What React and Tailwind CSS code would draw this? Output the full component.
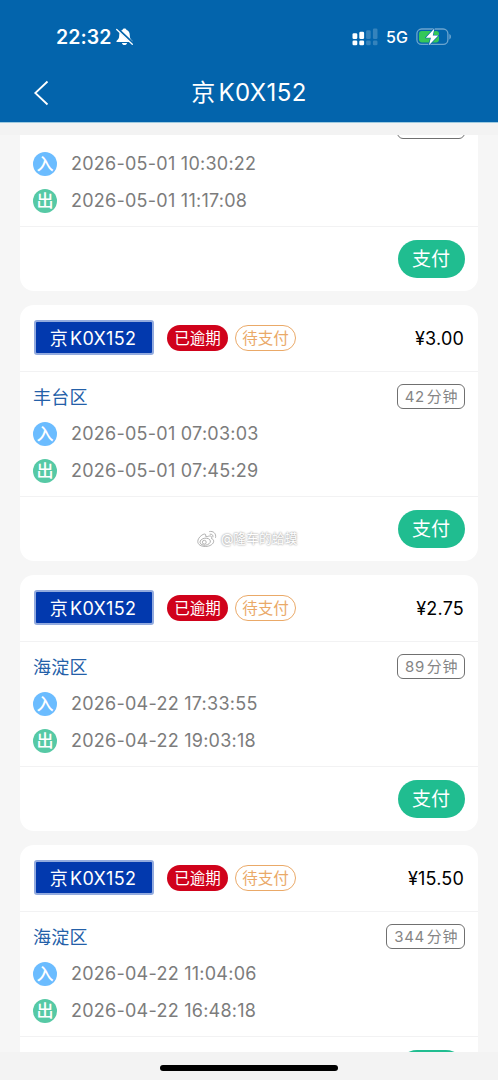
const records = [
  { id: 1, entry: "2026-05-01 10:30:22", exit: "2026-05-01 11:17:08", payable: true },
  { id: 2, region: "京", plate: "K0X152", amount: "¥3.00", area: "丰台区", minutes: "42", entry: "2026-05-01 07:03:03", exit: "2026-05-01 07:45:29", payable: true },
  { id: 3, region: "京", plate: "K0X152", amount: "¥2.75", area: "海淀区", minutes: "89", entry: "2026-04-22 17:33:55", exit: "2026-04-22 19:03:18", payable: true },
  { id: 4, region: "京", plate: "K0X152", amount: "¥15.50", area: "海淀区", minutes: "344", entry: "2026-04-22 11:04:06", exit: "2026-04-22 16:48:18", payable: false },
];

function StatusBar() {
  return (
    <div className="flex h-[74px] items-end justify-between pr-[46px] pb-[25px] pl-[56px] text-white">
      <div className="flex h-6 items-center gap-[3px]">
        <span className="text-[19.5px] leading-6 font-semibold tracking-[0.1px]">22:32</span>
        <svg className="h-[18px] w-[19px]" viewBox="0 0 19 18">
          <path d="M9.500.600c-1.200 0-1.900.6-2.100 1.500C5.200 3 4.200 4.700 4.200 7.200c0 3-.8 3.900-2.300 5.200-.9.800-.4 1.700.6 1.700h14c1 0 1.500-.9.600-1.700-1.500-1.300-2.300-2.200-2.300-5.200 0-2.500-1-4.200-3.200-5.100C11.400 1.200 10.700.6 9.500.6zM6.900 15h5.200c-.2 1.300-1.300 2.100-2.600 2.100S7.100 16.300 6.900 15z" fill="#fff" />
          <path d="M2.600 1 18 15.400" stroke="#0364ac" strokeWidth="2.6" />
          <path d="M1.700 1.500 17.300 16.200" stroke="#fff" strokeWidth="1.3" strokeLinecap="round" />
        </svg>
      </div>
      <div className="flex h-6 items-center">
        <svg className="h-[18px] w-[26px]" viewBox="0 0 26 18" fill="#fff">
          <rect x="0.5" y="5.2" width="4.8" height="5.8" rx="1.3" />
          <rect x="7.3" y="3.8" width="4.8" height="7.2" rx="1.3" />
          <rect x="14.1" y="2.2" width="4.6" height="8.8" rx="1.3" opacity=".2" />
          <rect x="20.9" y="0.5" width="4.6" height="10.5" rx="1.3" opacity=".2" />
          <rect x="0.5" y="12.4" width="4.8" height="4.8" rx="1.3" />
          <rect x="7.3" y="12.4" width="4.8" height="4.8" rx="1.3" />
          <rect x="14.1" y="12.4" width="4.6" height="4.8" rx="1.3" opacity=".2" />
          <rect x="20.9" y="12.4" width="4.6" height="4.8" rx="1.3" opacity=".2" />
        </svg>
        <span className="ml-[8px] w-[22px] text-[16px] leading-6 font-medium">5G</span>
        <svg className="ml-[8px] h-[18px] w-[36px]" viewBox="0 0 36 18">
          <rect x=".9" y="1" width="31" height="15.4" rx="4.7" fill="none" stroke="#fff" strokeOpacity=".42" strokeWidth="1.3" />
          <path d="M33.400 6c2 .8 2 4.600 0 5.400z" fill="#fff" opacity=".45" />
          <rect x="3" y="3" width="20" height="11.400" rx="2.8" fill="#34c759" />
          <path d="M18.400.4 9.800 9.700h5.100l-2 7.500 9.400-9.600h-5.500z" fill="#fff" stroke="#0364ac" strokeWidth="1.2" paintOrder="stroke" strokeLinejoin="round" />
        </svg>
      </div>
    </div>
  );
}

function TimeRow({ mark, color, time }) {
  return (
    <div className="flex h-[37px] items-center">
      <span className={`flex h-6 w-6 items-center justify-center rounded-full text-[17px] leading-6 font-medium text-white ${color}`}>{mark}</span>
      <span className="ml-[14px] text-[18px] tracking-[0.25px] whitespace-nowrap text-[#7c7c7c]">{time}</span>
    </div>
  );
}

function RecordCard({ record }) {
  return (
    <article className="h-[256px] shrink-0 overflow-hidden rounded-[14px] bg-white">
      <div className="flex h-[67px] items-center border-b-[1.5px] border-[#f2f2f3] px-[14px]">
        {record.plate && (
          <>
            <span className="-mt-px flex h-[35px] w-[120px] items-center justify-center gap-[2px] rounded-[3px] border-2 border-[#92aade] bg-[#0239ae] pt-[2px] pr-[2px] text-[18px] tracking-[0.3px] text-white">
              <span>{record.region}</span>
              <span>{record.plate}</span>
            </span>
            <span className="ml-[13px] flex h-[26px] w-[61px] items-center justify-center rounded-full bg-[#d0021b] pt-[2px] text-[15.5px] leading-5 text-white">已逾期</span>
            <span className="ml-[7px] flex h-[26px] w-[61px] items-center justify-center rounded-full border-[1.5px] border-[#eaa968] pt-[2px] text-[15.5px] leading-5 text-[#eaa968]">待支付</span>
            <span className="ml-auto text-[18px] tracking-[0.2px] text-black">{record.amount}</span>
          </>
        )}
      </div>
      <div className="h-[125px] border-b-[1.5px] border-[#f2f2f3] px-[13px] pt-[6px]">
        <div className="flex h-[37px] items-center justify-between">
          <span className="pt-[2px] text-[18px] tracking-[0.2px] text-[#2460a8]">{record.area}</span>
          <span className="flex h-[25px] min-w-[68px] items-center rounded-[6px] border-[1.4px] border-[#707070] pt-px pr-[6px] pl-[7px] text-[15px] tracking-[0.6px] text-[#858585]">
            {record.minutes && (
              <>
                <span className="mr-[2px]">{record.minutes}</span>分钟
              </>
            )}
          </span>
        </div>
        <TimeRow mark="入" color="bg-[#6bbcff]" time={record.entry} />
        <TimeRow mark="出" color="bg-[#56c9a5]" time={record.exit} />
      </div>
      <div className="flex h-[64px] items-start justify-end pt-[13px] pr-[13px]">
        <button className="h-[38px] w-[67px] rounded-full bg-[#20bd90] pt-[2px] pr-px text-[19px] leading-[36px] text-white">{record.payable && "支付"}</button>
      </div>
    </article>
  );
}

function Watermark() {
  return (
    <div className="absolute top-[529px] left-[197px] flex h-[20px] items-center gap-[4px]">
      <svg className="h-[19px] w-[20px]" viewBox="0 0 20 19" fill="none" stroke="#a0a0a0" strokeWidth=".8">
        <path d="M8.500 6.300c1-2.400-.8-3-3.600-1.200C2.200 7 .8 9.500.8 11.500c0 3.300 3.500 5 7.600 5 4.700 0 8.300-2.700 8.300-5.300 0-1.600-1.200-2.300-2.200-2.600.8-2.300-.8-3.400-4.200-2z" />
        <ellipse cx="8.2" cy="11.7" rx="5.2" ry="3.5" transform="rotate(-8 8.2 11.7)" />
        <circle cx="7.3" cy="12.2" r="1.9" />
        <path d="M12.200 1.600c4-1 7.300 2 6.300 6.200M12.700 4.200c2.200-.4 3.700 1 3.200 3" />
      </svg>
      <span className="text-[12.8px] leading-5 whitespace-nowrap text-white [text-shadow:0_0_2px_#a0a0a0,0_0_2px_#bbb]">@隆车的蛤蟆</span>
    </div>
  );
}

export default function App() {
  return (
    <main className="relative flex h-[1080px] w-[498px] flex-col overflow-hidden bg-[#f6f6f6] font-['Inter','Noto_Sans_CJK_SC',sans-serif]">
      <header className="h-[123px] shrink-0 border-b border-[#9fcbe0] bg-[#0364ac]">
        <StatusBar />
        <div className="grid h-[38px] grid-cols-[96px_1fr_96px] items-center">
          <svg className="ml-[33px] h-[26px] w-[16px]" viewBox="0 0 16 26" fill="none" stroke="#fff" strokeWidth="1.8">
            <path d="M14.500 1.500 2.300 13l12.200 11.500" />
          </svg>
          <h1 className="flex items-center justify-center gap-[3px] text-[24px] leading-[38px] tracking-[0.4px] text-white">
            <span>京</span>
            <span>K0X152</span>
          </h1>
        </div>
      </header>
      <div className="h-[12px] shrink-0 bg-[#f3f3f3]" />
      <section className="h-[917px] shrink-0 overflow-hidden px-[20px]">
        <div className="-mt-[100px] flex flex-col gap-[14px]">
          {records.map((record) => (
            <RecordCard key={record.id} record={record} />
          ))}
        </div>
      </section>
      <footer className="flex h-[28px] shrink-0 justify-center bg-[#f3f3f3] pt-[13px]">
        <div className="h-[6px] w-[178px] rounded-full bg-black" />
      </footer>
      <Watermark />
    </main>
  );
}
